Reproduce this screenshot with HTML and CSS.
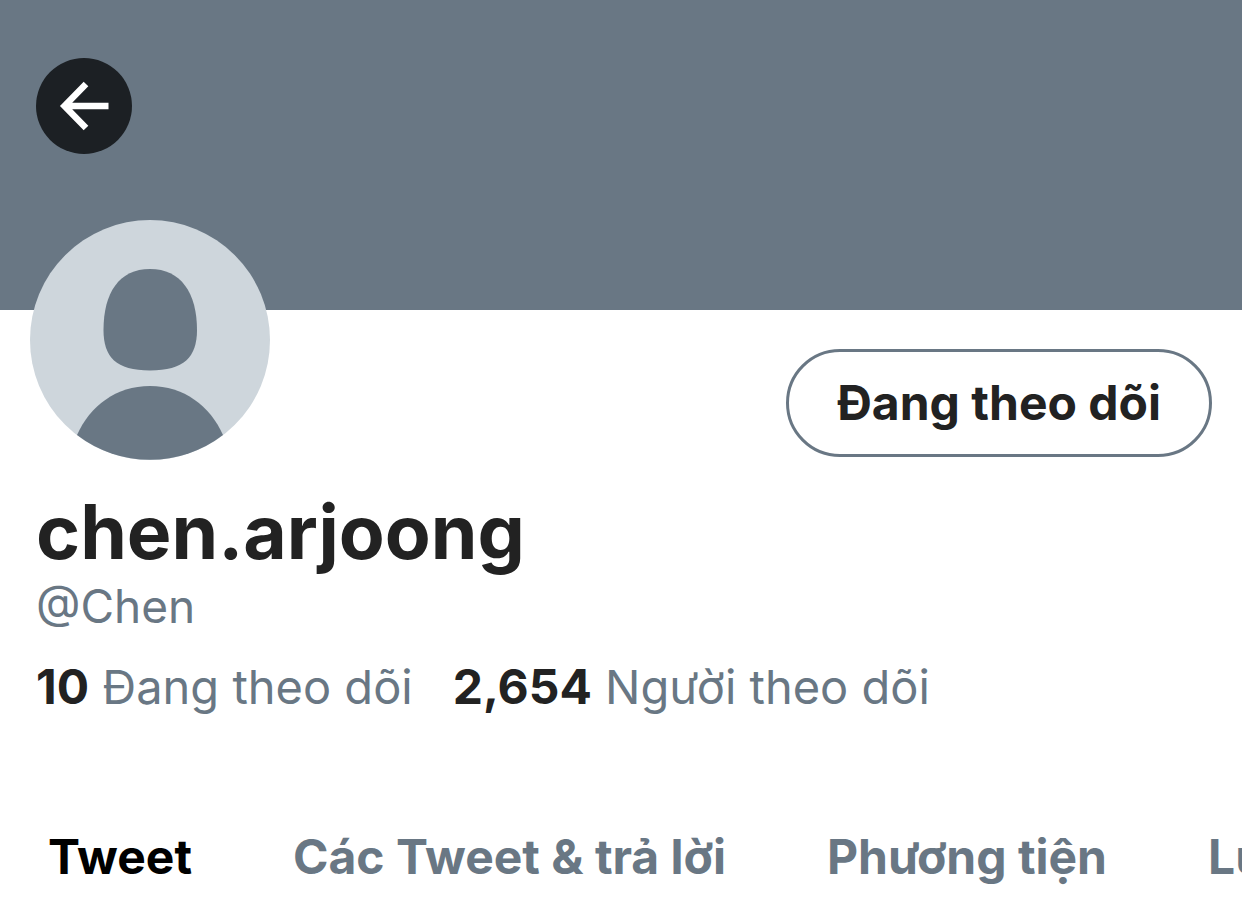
FILE: index.html
```html
<!DOCTYPE html>
<html lang="vi">
<head>
    <meta charset="UTF-8">
    <meta name="viewport" content="width=device-width, initial-scale=1.0">
    <title>chen.arjoong (@Chen)</title>
    <link rel="stylesheet" href="styles.css">
</head>
<body>

<header class="banner">
    <button class="back-btn" type="button" aria-label="Quay lại">
        <svg viewBox="0 0 96 96" aria-hidden="true">
            <path d="M72.5 48H32M50 26L28.500 48L50 70" />
        </svg>
    </button>
</header>

<main>
    <section class="profile">
        <div class="profile-top">
            <svg class="avatar" viewBox="0 0 240 240" aria-hidden="true">
                <circle class="avatar-bg" cx="120" cy="120" r="120" />
                <path class="avatar-person" d="M120 49C151 49 167 73 167 110C167 137 154 150.500 120 150.500C86 150.500 73.500 137 73.500 110C73.500 73 89 49 120 49Z" />
                <path class="avatar-person" d="M47 215C60 186 86 166 120 166C154 166 180 186 193 215A120 120 0 0 1 47 215Z" />
            </svg>
            <button class="follow-btn" type="button">Đang theo dõi</button>
        </div>

        <h1 class="name">chen.arjoong</h1>
        <p class="handle">@Chen</p>

        <div class="stats">
            <a href="#following"><strong>10</strong> Đang theo dõi</a>
            <a href="#followers"><strong>2,654</strong> Người theo dõi</a>
        </div>
    </section>

    <nav class="tabs">
        <a class="tab active" href="#tweets">Tweet</a>
        <a class="tab" href="#replies">Các Tweet &amp; trả lời</a>
        <a class="tab" href="#media">Phương tiện</a>
        <a class="tab" href="#likes">Lượt thích</a>
    </nav>
</main>

</body>
</html>
```
FILE: styles.css
```css
* {
    box-sizing: border-box;
}
body {
    margin: 0;
    background-color: #fff;
    color: #222;
    font-family: Inter, "Noto Sans", sans-serif;
    font-size: 47px;
    line-height: 60px;
}
a {
    color: inherit;
    text-decoration: none;
}
button {
    font: inherit;
    cursor: pointer;
}
.banner {
    height: 310px;
    padding: 58px 36px;
    background-color: #697784;
}
.back-btn {
    display: block;
    width: 96px;
    height: 96px;
    padding: 0;
    border: none;
    border-radius: 50%;
    background-color: #1c2024;
}
.back-btn svg {
    display: block;
    fill: none;
    stroke: #fff;
    stroke-width: 6.5;
}
.profile {
    padding: 0 30px;
}
.profile-top {
    display: flex;
    justify-content: space-between;
    align-items: flex-end;
    margin-top: -90px;
}
.avatar {
    width: 240px;
    height: 240px;
}
.avatar-bg {
    fill: #ced6dc;
}
.avatar-person {
    fill: #697784;
}
.follow-btn {
    height: 108px;
    margin-bottom: 3px;
    padding: 0 48px;
    border: 3px solid #697784;
    border-radius: 54px;
    background-color: #fff;
    color: #222;
    font-size: 48px;
    font-weight: 700;
}
.name {
    margin: 30px 6px 0;
    font-size: 75px;
    line-height: 84px;
    font-weight: 700;
}
.handle {
    margin: 2px 6px 0;
    color: #697784;
    font-size: 46px;
}
.stats {
    display: flex;
    gap: 40px;
    margin: 21px 6px 0;
    color: #697784;
}
.stats strong {
    color: #222;
    font-size: 48px;
}
.tabs {
    display: flex;
    gap: 101px;
    margin-top: 110px;
    padding: 0 48px;
    overflow: hidden;
    white-space: nowrap;
    color: #697784;
    font-size: 48px;
    font-weight: 700;
}
.active {
    color: #000;
}
```
